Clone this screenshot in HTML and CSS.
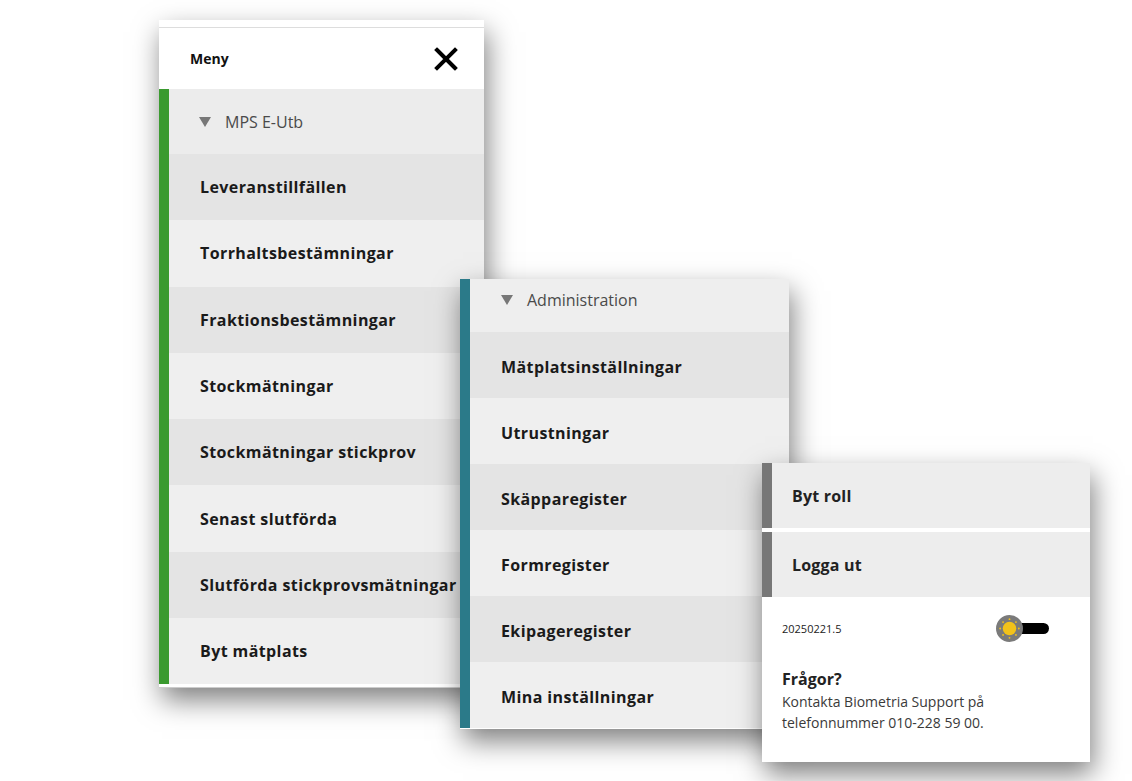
FILE: index.html
```html
<!DOCTYPE html>
<html lang="sv">
<head>
    <meta charset="UTF-8">
    <meta name="viewport" content="width=device-width, initial-scale=1.0">
    <title>Meny</title>
    <link rel="stylesheet" href="styles.css">
</head>
<body>
    <div class="canvas">
        <!-- Huvudmeny -->
        <div class="panel panel-main">
            <div class="panel-strip"></div>
            <div class="panel-header">
                <span class="panel-title">Meny</span>
                <svg class="close-icon" width="24" height="24" viewBox="0 0 24 24">
                    <path d="M3 3 L21 21 M21 3 L3 21" stroke="#000" stroke-width="4" stroke-linecap="square" fill="none"/>
                </svg>
            </div>
            <div class="menu menu-green">
                <div class="menu-group"><span class="caret"></span>MPS E-Utb</div>
                <div class="menu-item dark">Leveranstillfällen</div>
                <div class="menu-item">Torrhaltsbestämningar</div>
                <div class="menu-item dark">Fraktionsbestämningar</div>
                <div class="menu-item">Stockmätningar</div>
                <div class="menu-item dark">Stockmätningar stickprov</div>
                <div class="menu-item">Senast slutförda</div>
                <div class="menu-item dark">Slutförda stickprovsmätningar</div>
                <div class="menu-item">Byt mätplats</div>
            </div>
        </div>

        <!-- Administration -->
        <div class="panel panel-admin">
            <div class="menu menu-teal">
                <div class="menu-group short"><span class="caret"></span>Administration</div>
                <div class="menu-item dark">Mätplatsinställningar</div>
                <div class="menu-item">Utrustningar</div>
                <div class="menu-item dark">Skäpparegister</div>
                <div class="menu-item">Formregister</div>
                <div class="menu-item dark">Ekipageregister</div>
                <div class="menu-item">Mina inställningar</div>
            </div>
        </div>

        <!-- Användare -->
        <div class="panel panel-user">
            <div class="user-row">Byt roll</div>
            <div class="user-row">Logga ut</div>
            <div class="footer">
                <div class="footer-top">
                    <span class="version">20250221.5</span>
                    <div class="toggle">
                        <span class="toggle-track"></span>
                        <span class="toggle-knob">
                            <svg width="27" height="27" viewBox="0 0 26 26">
                                <circle cx="13" cy="13" r="6.5" fill="#f2c21a"/>
                                <g fill="#f2c21a">
                                    <circle cx="13" cy="4" r="0.9"/>
                                    <circle cx="13" cy="22" r="0.9"/>
                                    <circle cx="4" cy="13" r="0.9"/>
                                    <circle cx="22" cy="13" r="0.9"/>
                                    <circle cx="6.8" cy="6.8" r="0.9"/>
                                    <circle cx="19.2" cy="6.8" r="0.9"/>
                                    <circle cx="6.8" cy="19.2" r="0.9"/>
                                    <circle cx="19.2" cy="19.2" r="0.9"/>
                                </g>
                            </svg>
                        </span>
                    </div>
                </div>
                <div class="questions">
                    <h3>Frågor?</h3>
                    <p>Kontakta Biometria Support på telefonnummer 010-228 59 00.</p>
                </div>
            </div>
        </div>
    </div>
</body>
</html>
```

FILE: styles.css
```css
body {
    margin: 0;
    background: #ffffff;
    font-family: "Open Sans", "Noto Sans", Arial, sans-serif;
    color: #1e1e1e;
}
.canvas {
    position: relative;
    width: 1132px;
    height: 781px;
    overflow: hidden;
}
.panel {
    position: absolute;
    background: #ffffff;
    box-shadow: 3px 12px 26px rgba(0, 0, 0, 0.5);
}
.panel-main {
    left: 159px;
    top: 20px;
    width: 325px;
    padding-bottom: 3px;
    border-bottom: 1px solid #cccccc;
}
.panel-strip {
    height: 7px;
    border-bottom: 1px solid #dddddd;
}
.panel-header {
    height: 61px;
    display: flex;
    align-items: center;
    justify-content: space-between;
    padding: 0 26px 0 31px;
}
.panel-title {
    font-size: 14px;
    font-weight: 700;
    color: #111;
}
.menu {
    display: flex;
    flex-direction: column;
    border-left: 10px solid #3a9a2f;
}
.menu-teal {
    border-left-color: #2b7a89;
}
.menu-group {
    height: 65px;
    display: flex;
    align-items: center;
    padding-left: 30px;
    background: #ececec;
    font-size: 16px;
    color: #4a4a4a;
}
.menu-group.short {
    height: 43px;
    align-items: flex-start;
    padding-top: 10px;
    padding-left: 31px;
    background: #eeeeee;
}
.caret {
    width: 0;
    height: 0;
    border-left: 6px solid transparent;
    border-right: 6px solid transparent;
    border-top: 10px solid #777777;
    margin-right: 14px;
}
.menu-group.short .caret {
    margin-top: 6px;
}
.menu-item {
    height: 66.3px;
    display: flex;
    align-items: center;
    padding-left: 31px;
    background: #efefef;
    font-size: 16px;
    font-weight: 700;
    letter-spacing: 0.4px;
    color: #1a1a1a;
    white-space: nowrap;
}
.menu-item.dark {
    background: #e4e4e4;
}
.panel-admin {
    left: 460px;
    top: 279px;
    width: 329px;
    padding-bottom: 1px;
}
.panel-admin .menu-item {
    height: 62px;
    padding-top: 4px;
}
.panel-user {
    left: 762px;
    top: 463px;
    width: 328px;
}
.user-row {
    height: 65px;
    display: flex;
    align-items: center;
    padding-left: 20px;
    border-left: 10px solid #777777;
    background: #ededed;
    font-size: 16px;
    font-weight: 700;
    color: #222;
    letter-spacing: 0.2px;
}
.user-row + .user-row {
    margin-top: 4px;
}
.footer {
    padding: 18px 20px 29px 20px;
}
.footer-top {
    display: flex;
    align-items: center;
    justify-content: space-between;
    padding-right: 21px;
}
.version {
    font-size: 11px;
    color: #222;
}
.toggle {
    position: relative;
    width: 53px;
    height: 27px;
}
.toggle-track {
    position: absolute;
    left: 17px;
    top: 8px;
    width: 36px;
    height: 11px;
    border-radius: 6px;
    background: #000000;
}
.toggle-knob {
    position: absolute;
    left: 0;
    top: 0;
    width: 27px;
    height: 27px;
    border-radius: 50%;
    background: #7a7a7a;
    display: flex;
}
.questions {
    margin-top: 26px;
}
.questions h3 {
    margin: 0 0 1px 0;
    font-size: 16px;
    font-weight: 700;
    color: #222;
}
.questions p {
    margin: 0;
    font-size: 14px;
    line-height: 21px;
    color: #3a3a3a;
}
```
